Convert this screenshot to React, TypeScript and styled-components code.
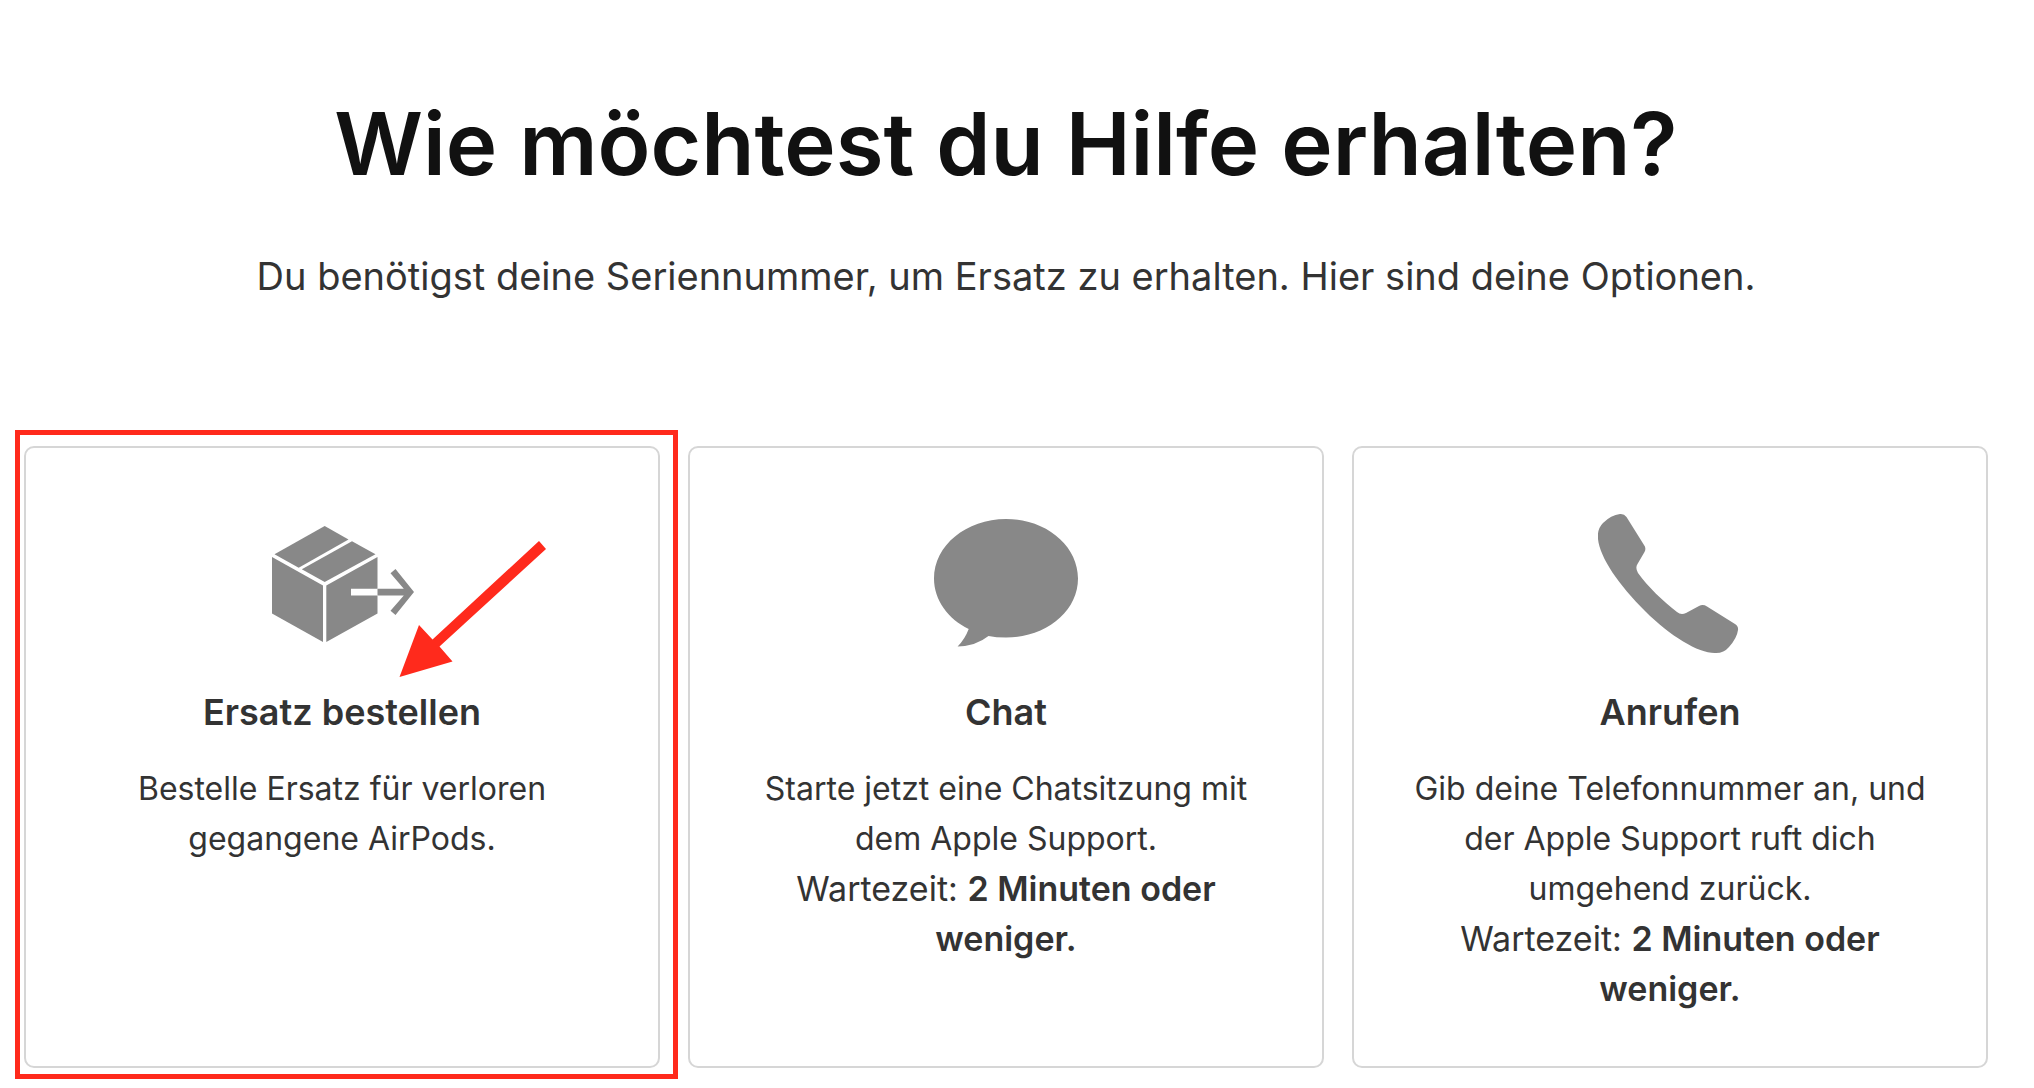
import React from "react";
import styled, { createGlobalStyle } from "styled-components";

const GlobalStyle = createGlobalStyle`
  *, *::before, *::after { box-sizing: border-box; }
  body {
    margin: 0;
    background: #fff;
    color: #333;
    font-family: Inter, "Liberation Sans", sans-serif;
  }
`;

const Page = styled.main`
  padding: 88px 46px 20px 24px;
`;

const Header = styled.header`
  text-align: center;
  margin-bottom: 142px;
`;

const Title = styled.h1`
  margin: 0 0 48px;
  color: #111;
  font-size: 87px;
  font-weight: 600;
  line-height: 112px;
`;

const Intro = styled.p`
  margin: 0;
  font-size: 38px;
  line-height: 56px;
`;

const Options = styled.ul`
  display: grid;
  grid-template-columns: repeat(3, minmax(0, 1fr));
  gap: 28px;
  margin: 0;
  padding: 0;
  list-style: none;
`;

const Option = styled.li`
  position: relative;
  display: flex;
`;

const Card = styled.a`
  flex: 1;
  display: flex;
  flex-direction: column;
  align-items: center;
  padding: 64px 52px 52px;
  border: 2px solid #d6d6d6;
  border-radius: 10px;
  color: inherit;
  text-align: center;
  text-decoration: none;
`;

const Icon = styled.svg`
  display: block;
  width: 144px;
  height: 144px;
  margin-bottom: 34px;
  fill: #888;
`;

const CardTitle = styled.h2`
  margin: 0 0 30px;
  font-size: 36px;
  font-weight: 600;
  line-height: 44px;
`;

const CardText = styled.p`
  margin: 0;
  font-size: 32px;
  line-height: 50px;
`;

const WaitText = styled(CardText)`
  font-size: 34px;

  strong { font-weight: 600; }
`;

const Highlight = styled.div`
  position: absolute;
  inset: -16px -18px -11px -9px;
  border: 5px solid #ff2a1c;
  pointer-events: none;
`;

const Pointer = styled.svg`
  position: absolute;
  top: 94px;
  left: 374px;
  width: 148px;
  height: 138px;
  fill: #ff2a1c;
  pointer-events: none;
`;

const BoxIcon = () => (
  <Icon viewBox="0 0 144 144" aria-hidden="true">
    <path d="M54.7 14L78.5 27.5L28.7 55.7L4.5 42.3Z" />
    <path d="M82 29.2L105.5 42.3L54.7 70L31.8 57.3Z" />
    <path d="M2 45L53 73.5V130L2 101.5Z" />
    <path d="M56.3 73.5L107.5 45V76.8H81V83.4H107.5V101.5L56.3 130Z" />
    <path d="M107.5 76.8H133.8L120.5 61.2L125.5 57L144 80L125.5 103L120.5 98.8L133.8 83.4H107.5Z" />
  </Icon>
);

const ChatIcon = () => (
  <Icon viewBox="0 0 144 144" aria-hidden="true">
    <path d="M72 7C111.800 7 144 33.500 144 66.500S111.800 125.500 72 125.500Q62 125.500 54.500 124Q42 134 23.600 134.500Q31 127 34.700 117C14 107 0 88 0 66.500C0 33.500 32.200 7 72 7Z" />
  </Icon>
);

const PhoneIcon = () => (
  <Icon viewBox="0 0 144 144" aria-hidden="true">
    <path d="M22 2Q26 1.500 28.500 5L46 33Q48.500 36 46.500 40L39.500 52Q37 56 40 61C50 75 65 89 79 100Q83 103.500 88 101L101 94Q105 92 109 94.500L137 112Q140.500 114 140 118Q139 126 131 135Q126 141 118 141C102 142 73 125 47 99C21 73 2 46 0 27Q-1 17 5 11Q13 3 22 2Z" />
  </Icon>
);

const options = [
  {
    id: "ersatz",
    title: "Ersatz bestellen",
    icon: <BoxIcon />,
    text: "Bestelle Ersatz für verloren gegangene AirPods.",
    highlighted: true,
  },
  {
    id: "chat",
    title: "Chat",
    icon: <ChatIcon />,
    text: "Starte jetzt eine Chatsitzung mit dem Apple Support.",
    wait: "2 Minuten oder weniger.",
  },
  {
    id: "anrufen",
    title: "Anrufen",
    icon: <PhoneIcon />,
    text: "Gib deine Telefonnummer an, und der Apple Support ruft dich umgehend zurück.",
    wait: "2 Minuten oder weniger.",
  },
];

export default function App() {
  return (
    <>
      <GlobalStyle />
      <Page lang="de">
        <Header>
          <Title>Wie möchtest du Hilfe erhalten?</Title>
          <Intro>
            Du benötigst deine Seriennummer, um Ersatz zu erhalten. Hier sind deine Optionen.
          </Intro>
        </Header>
        <Options>
          {options.map((option) => (
            <Option key={option.id}>
              <Card href={`#${option.id}`}>
                {option.icon}
                <CardTitle>{option.title}</CardTitle>
                <CardText>{option.text}</CardText>
                {option.wait && (
                  <WaitText>
                    Wartezeit: <strong>{option.wait}</strong>
                  </WaitText>
                )}
              </Card>
              {option.highlighted && (
                <>
                  <Highlight />
                  <Pointer viewBox="0 0 148 138" aria-hidden="true">
                    <path d="M141 1L148 9L41.500 106.500L54.500 121.500L1.500 137L21 85L34.500 99.500Z" />
                  </Pointer>
                </>
              )}
            </Option>
          ))}
        </Options>
      </Page>
    </>
  );
}
